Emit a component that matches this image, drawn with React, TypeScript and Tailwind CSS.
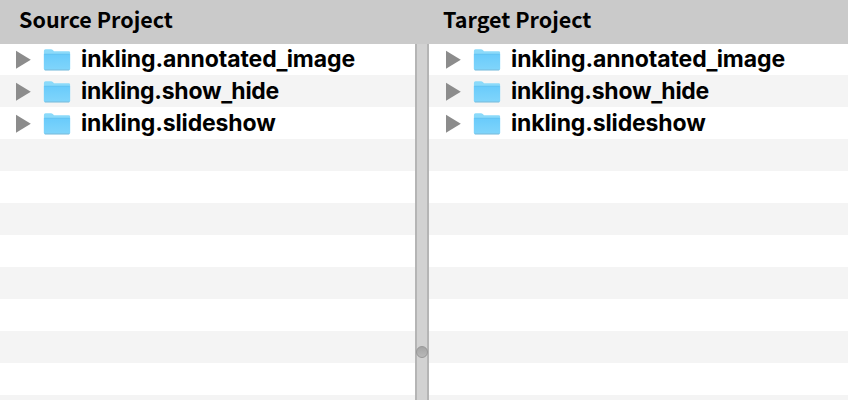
import { Fragment } from "react";

type Item = { name: string; tracking: string };

const items: Item[] = [
  { name: "inkling.annotated_image", tracking: "tracking-[-0.1px]" },
  { name: "inkling.show_hide", tracking: "tracking-[-0.27px]" },
  { name: "inkling.slideshow", tracking: "tracking-[-0.14px]" },
];
const rows = Array.from({ length: 12 }, (_, i) => items[i] ?? null);

function Disclosure() {
  return (
    <svg width="15" height="20" viewBox="0 0 15 20" className="shrink-0">
      <path d="M0 0.8 L14.8 9.8 L0 18.8 Z" fill="#8c8c8c" />
    </svg>
  );
}

function Folder({ id }: { id: string }) {
  return (
    <svg width="28" height="24" viewBox="0 0 28 24" className="ml-3 shrink-0">
      <defs>
        <linearGradient id={id} x1="0" y1="0" x2="0" y2="1">
          <stop offset="0" stopColor="#69cbfb" />
          <stop offset="1" stopColor="#80d5fb" />
        </linearGradient>
      </defs>
      <path d="M0.9 3 Q0.9 1.3 2.5 1.3 H8 Q9 1.3 9.8 2.1 L11 3.2 H25.8 Q27.1 3.2 27.1 4.6 V20.9 Q27.1 22.3 25.7 22.3 H2.3 Q0.9 22.3 0.9 20.9 Z" fill="#8bdafa" />
      <path d="M0.9 6 H27.1 V20.5 Q27.1 21.9 25.7 21.9 H2.3 Q0.9 21.9 0.9 20.5 Z" fill={`url(#${id})`} />
      <path d="M1.3 6.2 H26.7" stroke="#60c0ee" strokeWidth="0.7" />
      <path d="M1.8 22 H26.2" stroke="#78b4d2" strokeWidth="0.8" />
    </svg>
  );
}

function Label({ name, tracking }: Item) {
  return (
    <span className={`ml-2.5 whitespace-nowrap font-['Inter','Liberation_Sans',sans-serif] text-[23px] leading-[31px] font-bold text-black ${tracking}`}>
      {name.split("_").map((part, i) => (
        <Fragment key={i}>
          {i > 0 && <span className="relative top-0.5 tracking-[-0.8px]">_</span>}
          {part}
        </Fragment>
      ))}
    </span>
  );
}

function Tree({ side }: { side: string }) {
  return (
    <div className="flex min-w-0 flex-1 flex-col overflow-hidden">
      {rows.map((item, i) => (
        <div
          key={i}
          className={`flex shrink-0 items-center ${side === "target" ? "pl-[17px]" : "pl-4"} ${i === 0 ? "h-[31px]" : "h-8 pt-px"} ${i % 2 ? "bg-[#f4f4f4]" : "bg-white"}`}
        >
          {item && (
            <>
              <Disclosure />
              <Folder id={`folder-${side}-${i}`} />
              <Label {...item} />
            </>
          )}
        </div>
      ))}
    </div>
  );
}

export default function App() {
  return (
    <div className="flex h-[400px] w-[848px] flex-col overflow-hidden bg-white">
      <div className="flex h-11 shrink-0 items-center bg-[#cacaca] pb-1.5 font-['Noto_Sans_CJK_SC',sans-serif] text-[21.5px] leading-9.5 font-bold text-black">
        <div className="w-[424px] pl-[19px]">Source Project</div>
        <div className="pl-[19px]">Target Project</div>
      </div>
      <div className="flex min-h-0 flex-1">
        <div className="flex w-[415px]">
          <Tree side="source" />
        </div>
        <div className="flex w-3.5 shrink-0 flex-col items-center border-x-2 border-[#b5b5b5] bg-[#d2d2d2] pt-[302px]">
          <div className="size-3 shrink-0 rounded-full border border-[#989898] bg-linear-to-b from-[#a5a5a5] to-[#b8b8b8]" />
        </div>
        <Tree side="target" />
      </div>
    </div>
  );
}
